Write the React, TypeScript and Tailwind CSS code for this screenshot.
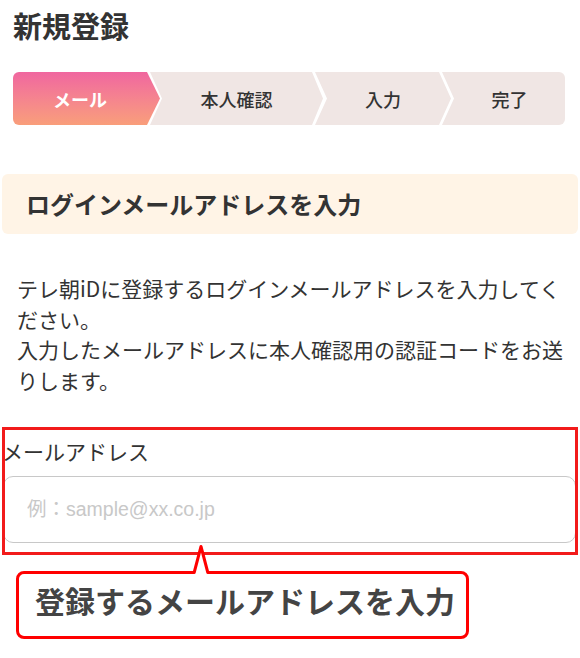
import React from "react";

export default function App() {
  return (
    <div className="w-[580px] h-[658px] bg-white overflow-hidden font-['Noto_Sans_CJK_JP','Noto_Sans',sans-serif] text-[#333333]">
      <h1 className="ml-[13px] pt-[11px] text-[29px] leading-[29px] font-bold">新規登録</h1>

      <div className="ml-[13px] mt-[32px] flex w-[552px] h-[53px] rounded-[6px] overflow-hidden bg-white text-[18px]">
        <div className="w-[147px] shrink-0 flex items-center justify-center pr-[13px] pt-[2px] bg-linear-to-b from-[#f0669f] to-[#f99e7a] text-white font-bold [clip-path:polygon(0_0,134px_0,147px_50%,134px_100%,0_100%)]">
          メール
        </div>
        <div className="ml-[-10px] w-[173px] shrink-0 flex items-center justify-center pl-[12px] pr-[12px] pt-[2px] bg-[#f0e6e4] font-medium [clip-path:polygon(0_0,162px_0,173px_50%,162px_100%,0_100%,12px_50%)]">
          本人確認
        </div>
        <div className="ml-[-8px] w-[136px] shrink-0 flex items-center justify-center pl-[12px] pr-[12px] pt-[2px] bg-[#f0e6e4] font-medium [clip-path:polygon(0_0,124px_0,136px_50%,124px_100%,0_100%,12px_50%)]">
          入力
        </div>
        <div className="ml-[-9px] flex-1 flex items-center justify-center pl-[12px] pt-[2px] bg-[#f0e6e4] font-medium [clip-path:polygon(0_0,100%_0,100%_100%,0_100%,12px_50%)]">
          完了
        </div>
      </div>

      <div className="mx-[2px] mt-[49px] h-[60px] rounded-[6px] bg-[#fff4e6] flex items-center pl-[24px] text-[24px] font-bold">
        ログインメールアドレスを入力
      </div>

      <p className="mt-[39px] pl-[17px] pr-[11px] text-[21px] leading-[30.7px]">
        テレ朝iDに登録するログインメールアドレスを入力してください。
        <br />
        入力したメールアドレスに本人確認用の認証コードをお送りします。
      </p>

      <div className="relative mt-[41px]">
        <div className="ml-[2px] text-[21px] leading-[28px]">メールアドレス</div>
        <input
          className="block mt-[11px] ml-[3px] w-[573px] h-[67px] border border-[#c8c8c8] rounded-[10px] pl-[23px] text-[19.5px] font-['Liberation_Sans','Noto_Sans_CJK_JP',sans-serif] placeholder:text-[#c8c8c8] outline-none"
          placeholder="例：sample@xx.co.jp"
        />
        <div className="absolute left-[2px] top-[-10px] w-[576px] h-[128px] border-[3px] border-[#f21b1b] pointer-events-none" />
      </div>

      <div className="relative mt-[28px] ml-[16px] w-[453px] h-[68px] border-[3px] border-[#ff0000] rounded-[8px] pl-[16px] pt-[11px] text-[30px] leading-[30px] font-bold text-[#444444]">
        <svg
          className="absolute left-[170px] top-[-32px] overflow-visible"
          width="24"
          height="36"
          viewBox="0 0 24 36"
        >
          <polygon points="5,32 12,4.5 19,32" fill="#ffffff" />
          <polyline
            points="4,30.5 5.2,30.5 12,4.5 18.8,30.5 20,30.5"
            fill="none"
            stroke="#ff0000"
            strokeWidth="3"
            strokeLinejoin="round"
          />
        </svg>
        登録するメールアドレスを入力
      </div>
    </div>
  );
}
